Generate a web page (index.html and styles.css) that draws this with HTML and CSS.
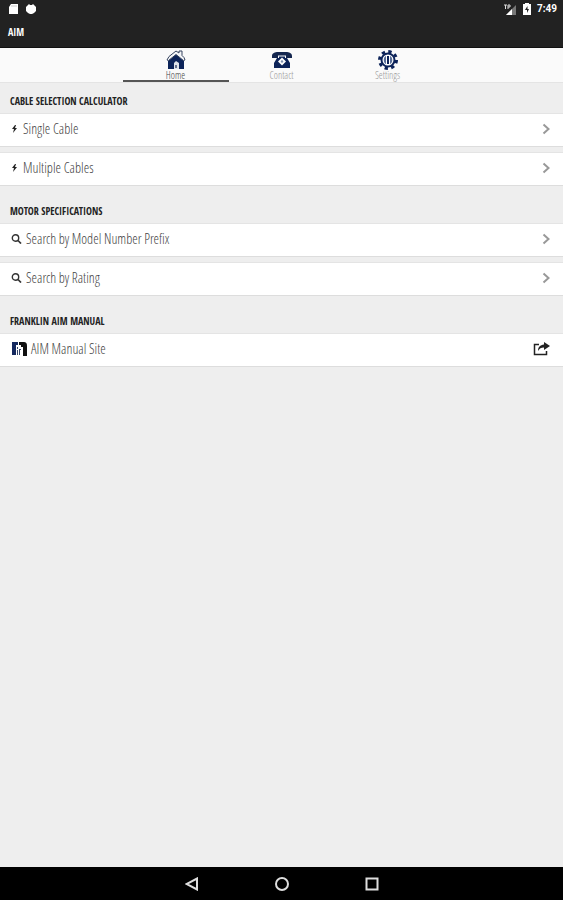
FILE: index.html
```html
<!DOCTYPE html>
<html lang="en">
<head>
<meta charset="utf-8">
<meta name="viewport" content="width=device-width, initial-scale=1">
<title>AIM</title>
<link rel="stylesheet" href="styles.css">
</head>
<body>
<header class="topbar">
  <div class="status">
    <div class="status-group">
      <svg width="10" height="10" viewBox="0 0 10 10"><path d="M3 0H10V10H1V3Z" fill="#fff"/><path d="M4 1V3M6 1V3M8 1V3" stroke="#aaa" stroke-width=".6"/></svg>
      <svg width="10" height="10" viewBox="0 0 10 10"><path d="M2 1L3 0L4 1H6L7 0L8 1L10 3V7L8 9L6 10H4L2 9L0 7V3Z" fill="#fff"/></svg>
    </div>
    <div class="status-group status-right">
      <svg width="13" height="11" viewBox="0 0 13 11"><path d="M12 1V11H2Z" fill="#777"/><path d="M8 5V11H2Z" fill="#fff"/><path d="M0 1H3M1.500 1V5M4 5V1H6V3H4" fill="none" stroke="#ddd"/></svg>
      <svg width="8" height="12" viewBox="0 0 8 12"><path d="M2 1V0H6V1H8V12H0V1Z" fill="#fff"/><path d="M4.500 3L2 7H4V10L6 6H4.500Z" fill="#222"/></svg>
      <span class="clock">7:49</span>
    </div>
  </div>
  <h1 class="title">AIM</h1>
</header>

<nav class="tabs">
  <a class="tab tab-active" href="#home">
    <svg width="20" height="20" viewBox="0 0 20 20"><path d="M2 11L10 4L18 11V19H13V13H8V19H2Z" fill="#0c2359"/><path d="M8 19V13L10 11L13 13V19Z" fill="#dfe3ea"/><path d="M9 15H11V18H9Z" fill="#66718c"/><path d="M1 10L3 6.500L10 1L13 3V1H16V5.500L18 7.500L19 10L17.500 10.500L10 4.500L2.500 10.500Z" fill="#f5f6f8" stroke="#34435f"/></svg>
    <span>Home</span>
  </a>
  <a class="tab" href="#contact">
    <svg width="20" height="20" viewBox="0 0 20 20"><path d="M0 6C0 3 3 2 6 2H14C17 2 20 3 20 6V8H14V5.500H6V8H0Z" fill="#14264f"/><path d="M7 6.500H13V8H15L18 13V18H2V13L5 8H7Z" fill="#0c2359"/><path d="M10 7.500L14 11.500L10 15.500L6 11.500Z" fill="#fff"/><circle cx="10" cy="11.500" r="1.200" fill="#8090ae"/></svg>
    <span>Contact</span>
  </a>
  <a class="tab" href="#settings">
    <svg width="20" height="20" viewBox="0 0 20 20"><circle cx="10" cy="10" r="8.500" fill="none" stroke="#0c2359" stroke-width="3" stroke-dasharray="3.340 3.340"/><circle cx="10" cy="10" r="6.500" fill="#fff" stroke="#0c2359" stroke-width="2"/><path d="M9 6H11V14H9Z" fill="#0c2359"/><path d="M8 6C5 7 5 13 8 14ZM12 6C15 7 15 13 12 14Z" fill="#5a6f98"/></svg>
    <span>Settings</span>
  </a>
</nav>

<main class="content">
  <section>
    <h2 class="heading heading-first">CABLE SELECTION CALCULATOR</h2>
    <div class="rows">
      <a class="row" href="#single">
        <svg width="8" height="10" viewBox="0 0 8 10"><path d="M4 1L1 5H3L2 9L6 4H4L5 1Z" fill="#222"/></svg>
        <span class="label">Single Cable</span>
        <svg class="chevron" width="8" height="12" viewBox="0 0 8 12"><path d="M1.500 1.500L6.500 6L1.500 10.500"/></svg>
      </a>
      <a class="row" href="#multiple">
        <svg width="8" height="10" viewBox="0 0 8 10"><path d="M4 1L1 5H3L2 9L6 4H4L5 1Z" fill="#222"/></svg>
        <span class="label">Multiple Cables</span>
        <svg class="chevron" width="8" height="12" viewBox="0 0 8 12"><path d="M1.500 1.500L6.500 6L1.500 10.500"/></svg>
      </a>
    </div>
  </section>
  <section>
    <h2 class="heading">MOTOR SPECIFICATIONS</h2>
    <div class="rows">
      <a class="row" href="#prefix">
        <svg width="11" height="10" viewBox="0 0 11 10"><circle cx="4.500" cy="4" r="3.200" fill="none" stroke="#333" stroke-width="1.400"/><path d="M7 6.500L10 9.500" stroke="#333" stroke-width="1.700"/></svg>
        <span class="label">Search by Model Number Prefix</span>
        <svg class="chevron" width="8" height="12" viewBox="0 0 8 12"><path d="M1.500 1.500L6.500 6L1.500 10.500"/></svg>
      </a>
      <a class="row" href="#rating">
        <svg width="11" height="10" viewBox="0 0 11 10"><circle cx="4.500" cy="4" r="3.200" fill="none" stroke="#333" stroke-width="1.400"/><path d="M7 6.500L10 9.500" stroke="#333" stroke-width="1.700"/></svg>
        <span class="label">Search by Rating</span>
        <svg class="chevron" width="8" height="12" viewBox="0 0 8 12"><path d="M1.500 1.500L6.500 6L1.500 10.500"/></svg>
      </a>
    </div>
  </section>
  <section>
    <h2 class="heading">FRANKLIN AIM MANUAL</h2>
    <div class="rows">
      <a class="row" href="#manual">
        <svg width="16" height="16" viewBox="0 0 16 16"><path d="M1 1H7V4H5V14H1Z" fill="#15295f"/><path d="M8 1H13C15 1 16 2 16 5V15H12V6H10V4H8Z" fill="#111"/><path d="M6 6H7V8H6ZM6 9H7V14H6ZM8 8H10V9H9V14H8Z" fill="#34446a"/></svg>
        <span class="label">AIM Manual Site</span>
        <svg width="17" height="14" viewBox="0 0 17 14"><path d="M6 2.500H1.500V12.500H13.500V9" fill="none" stroke="#222" stroke-width="1.500"/><path d="M11 0L17 4L11 8V5.500C8 5.500 6.500 6.500 5 9C5 5 7 3 11 2.500Z" fill="#222"/></svg>
      </a>
    </div>
  </section>
</main>

<footer class="navbar">
  <button class="nav-button" type="button" aria-label="Back"><svg width="14" height="14" viewBox="0 0 14 14"><path d="M12 1.500V12.500L1.500 7Z"/></svg></button>
  <button class="nav-button" type="button" aria-label="Home"><svg width="14" height="14" viewBox="0 0 14 14"><circle cx="7" cy="7" r="6"/></svg></button>
  <button class="nav-button" type="button" aria-label="Recent apps"><svg width="14" height="14" viewBox="0 0 14 14"><path d="M1.500 1.500H12.500V12.500H1.500Z"/></svg></button>
</footer>
</body>
</html>
```
FILE: styles.css
```css
* {
  box-sizing: border-box;
}

body {
  margin: 0;
  min-height: 100vh;
  display: flex;
  flex-direction: column;
  background: #eee;
  color: #444;
  font-family: "Open Sans Condensed Light", "Roboto Condensed", Lato, sans-serif;
}

a {
  color: inherit;
  text-decoration: none;
}

svg {
  display: block;
  flex: none;
}

.topbar {
  background: #222;
  color: #fff;
  padding: 2px 6px 6px 8px;
  border-bottom: 1px solid #111;
}

.status {
  display: flex;
  justify-content: space-between;
  align-items: center;
  height: 14px;
}

.status-group {
  display: flex;
  align-items: center;
  gap: 8px;
}

.status-right {
  gap: 6px;
}

.clock {
  font: 700 10px/14px Roboto, sans-serif;
}

.title,
.heading {
  font-family: "Open Sans Condensed", "Open Sans", sans-serif;
  font-size: 10px;
}

.title {
  margin: 8px 0 0;
  line-height: 17px;
}

.tabs {
  display: flex;
  justify-content: center;
  background: #fafafa;
  border-bottom: 1px solid #e4e4e4;
}

.tab {
  flex: 0 1 106px;
  display: flex;
  flex-direction: column;
  align-items: center;
  padding-top: 2px;
  border-bottom: 2px solid transparent;
  color: #999;
  font-size: 10px;
  line-height: 10px;
}

.tab-active {
  border-color: #555;
  color: #444;
}

.heading {
  margin: 0;
  padding: 18px 10px 5px;
  color: #222;
  line-height: 14px;
}

.heading-first {
  padding-top: 11px;
}

.rows {
  display: flex;
  flex-direction: column;
  gap: 5px;
}

.row {
  display: flex;
  align-items: center;
  gap: 4px;
  padding: 7px 13px 9px 11px;
  background: #fff;
  border-top: 1px solid #e4e4e4;
  border-bottom: 1px solid #ddd;
  font-size: 14px;
  line-height: 16px;
}

.label {
  flex: 1;
}

.chevron {
  fill: none;
  stroke: #999;
  stroke-width: 2;
}

.navbar {
  margin-top: auto;
  display: flex;
  justify-content: center;
  background: #000;
}

.nav-button {
  flex: 0 1 90px;
  display: flex;
  justify-content: center;
  padding: 10px 0 9px;
  border: 0;
  background: none;
  fill: none;
  stroke: #ddd;
  stroke-width: 2;
}
```
